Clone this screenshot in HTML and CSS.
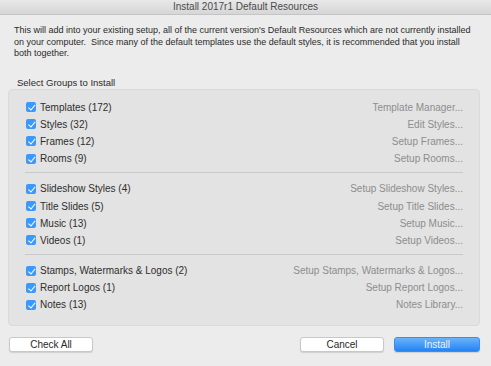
FILE: index.html
```html
<!DOCTYPE html>
<html lang="en">
<head>
    <meta charset="UTF-8">
    <title>Install 2017r1 Default Resources</title>
    <link rel="stylesheet" href="styles.css">
</head>
<body>
    <div class="window">
        <div class="titlebar">Install 2017r1 Default Resources</div>
        <p class="intro">This will add into your existing setup, all of the current version's Default Resources which are not currently installed on your computer.&nbsp; Since many of the default templates use the default styles, it is recommended that you install both together.</p>

        <div class="group-label">Select Groups to Install</div>
        <div class="group-box">
            <div class="section">
                <div class="row"><span class="check"></span><span class="name">Templates (172)</span><span class="link">Template Manager...</span></div>
                <div class="row"><span class="check"></span><span class="name">Styles (32)</span><span class="link">Edit Styles...</span></div>
                <div class="row"><span class="check"></span><span class="name">Frames (12)</span><span class="link">Setup Frames...</span></div>
                <div class="row"><span class="check"></span><span class="name">Rooms (9)</span><span class="link">Setup Rooms...</span></div>
            </div>
            <div class="section">
                <div class="row"><span class="check"></span><span class="name">Slideshow Styles (4)</span><span class="link">Setup Slideshow Styles...</span></div>
                <div class="row"><span class="check"></span><span class="name">Title Slides (5)</span><span class="link">Setup Title Slides...</span></div>
                <div class="row"><span class="check"></span><span class="name">Music (13)</span><span class="link">Setup Music...</span></div>
                <div class="row"><span class="check"></span><span class="name">Videos (1)</span><span class="link">Setup Videos...</span></div>
            </div>
            <div class="section">
                <div class="row"><span class="check"></span><span class="name">Stamps, Watermarks &amp; Logos (2)</span><span class="link">Setup Stamps, Watermarks &amp; Logos...</span></div>
                <div class="row"><span class="check"></span><span class="name">Report Logos (1)</span><span class="link">Setup Report Logos...</span></div>
                <div class="row"><span class="check"></span><span class="name">Notes (13)</span><span class="link">Notes Library...</span></div>
            </div>
        </div>

        <div class="buttons">
            <button class="btn">Check All</button>
            <div class="spacer"></div>
            <button class="btn">Cancel</button>
            <button class="btn primary">Install</button>
        </div>
    </div>
</body>
</html>
```

FILE: styles.css
```css
html, body {
    margin: 0;
    padding: 0;
    background: #ececec;
}
body {
    font-family: "Liberation Sans", Arial, sans-serif;
    font-size: 10px;
    color: #2a2a2a;
    width: 491px;
    height: 366px;
    overflow: hidden;
}
.window {
    display: flex;
    flex-direction: column;
}
.titlebar {
    height: 15px;
    line-height: 14px;
    text-align: center;
    color: #4a4a4a;
    background: linear-gradient(#e8e8e8, #d6d6d6);
    border-bottom: 1px solid #c4c4c4;
    box-sizing: border-box;
}
.intro {
    margin: 10px 13px 0 14px;
    line-height: 11.5px;
    font-size: 9px;
}
.group-label {
    margin: 17px 0 0 17px;
    font-size: 9.5px;
}
.group-box {
    margin: 1px 11px 0 8px;
    height: 237px;
    box-sizing: border-box;
    background: #e3e3e3;
    border: 1px solid #dadada;
    border-radius: 4px;
    padding: 9px 16px 0 16px;
}
.section {
    padding: 0 0 5px 0;
    border-bottom: 1px solid #c9c9c9;
    margin-bottom: 7px;
}
.section:last-child {
    border-bottom: none;
}
.row {
    display: flex;
    align-items: center;
    height: 17.2px;
}
.check {
    width: 10px;
    height: 10px;
    border-radius: 2px;
    background: #3b99fc;
    margin: 0 4px 0 1px;
    position: relative;
}
.check::after {
    content: "";
    position: absolute;
    left: 3.5px;
    top: 1px;
    width: 2.5px;
    height: 5.5px;
    border: solid #fff;
    border-width: 0 1.3px 1.3px 0;
    transform: rotate(40deg);
}
.name {
    flex: 1;
    color: #2e2e2e;
}
.link {
    color: #8d8d8d;
}
.buttons {
    display: flex;
    margin: 11px 11px 0 9px;
    gap: 10px;
}
.spacer {
    flex: 1;
}
.btn {
    font-family: inherit;
    font-size: 10px;
    height: 15px;
    width: 84px;
    padding: 0;
    background: #fff;
    color: #2a2a2a;
    border: 1px solid #c8c8c8;
    border-radius: 3px;
    box-shadow: 0 1px 1px rgba(0,0,0,0.12);
}
.btn.primary {
    width: 86px;
    color: #eef5ff;
    border-color: #3a8ef2;
    background: linear-gradient(#6ab3fb, #2483f3);
}
```
